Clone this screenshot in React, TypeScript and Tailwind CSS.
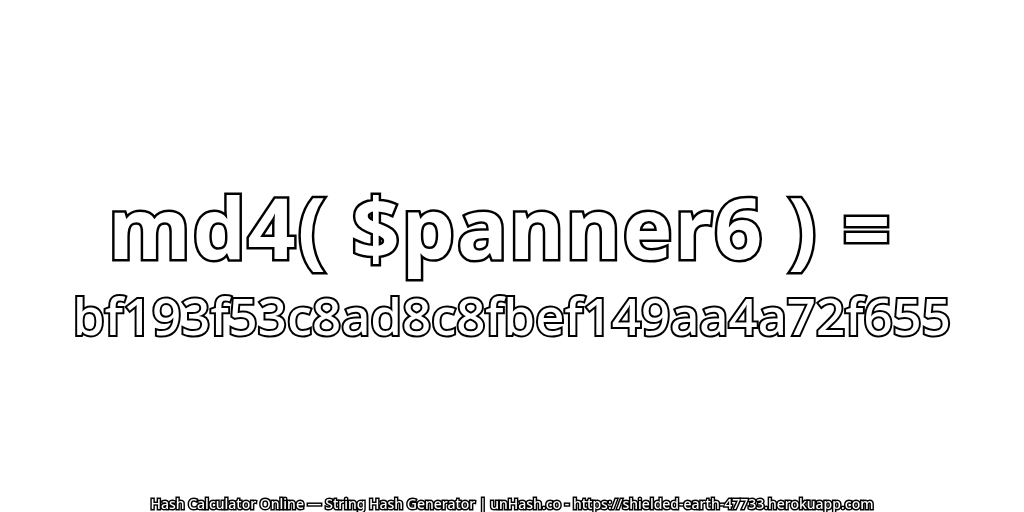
export default function App() {
  return (
    <div className="relative flex h-[512px] w-[1024px] flex-col items-center overflow-hidden bg-white font-['Noto_Sans','Open_Sans',sans-serif] text-white [will-change:transform]">
      <div className="mt-[177px] whitespace-nowrap pr-[23px] text-[84px] leading-[100px] font-bold tracking-[2px] [-webkit-text-stroke:5px_#000] [paint-order:stroke_fill]">md4( $panner6 ) =</div>
      <div className="mt-[8px] whitespace-nowrap text-[51px] leading-[60px] font-medium [-webkit-text-stroke:4px_#000] [paint-order:stroke_fill]">bf193f53c8ad8c8fbef149aa4a72f655</div>
      <div className="mt-auto whitespace-nowrap text-[14px] leading-[16px] font-medium [-webkit-text-stroke:3px_#000] [paint-order:stroke_fill]">Hash Calculator Online — String Hash Generator | unHash.co - https://shielded-earth-47733.herokuapp.com</div>
    </div>
  );
}
